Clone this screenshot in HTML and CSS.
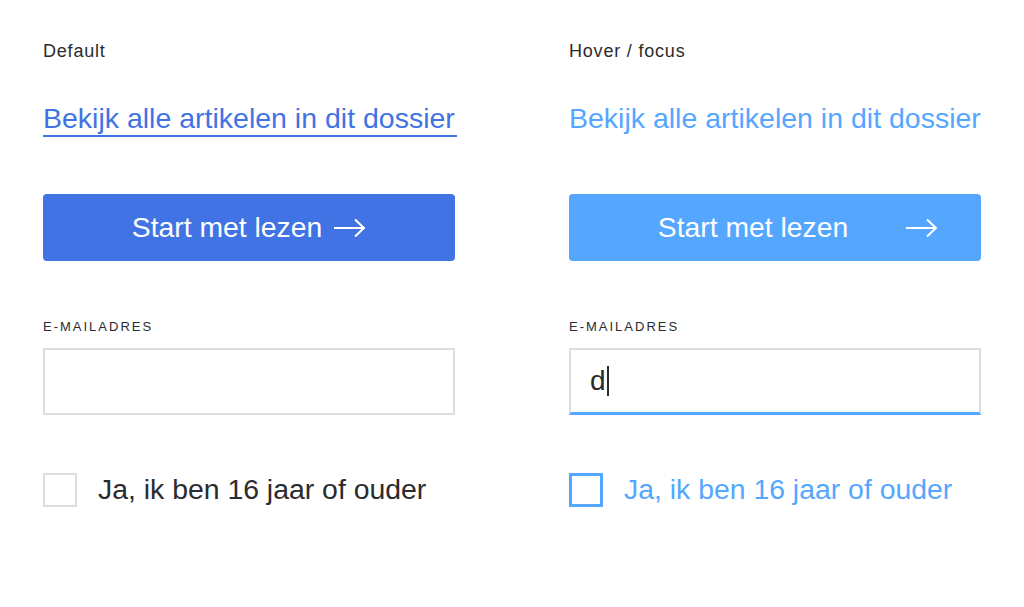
FILE: index.html
```html
<!DOCTYPE html>
<html lang="nl">
<head>
<meta charset="utf-8">
<title>States</title>
<link rel="stylesheet" href="styles.css">
</head>
<body>
<main class="grid">
  <section class="col">
    <div class="state-title">Default</div>
    <div class="link-row"><a class="link" href="#">Bekijk alle artikelen in dit dossier</a></div>
    <button class="btn">
      <span>Start met lezen</span>
      <svg class="arrow" width="33" height="20" viewBox="0 0 33 20"><path d="M1 10H31M22 1.5L31 10L22 18.5" fill="none" stroke="#fff" stroke-width="2"/></svg>
    </button>
    <div class="field">
      <div class="field-label">E-MAILADRES</div>
      <div class="input"></div>
    </div>
    <label class="check">
      <span class="box"></span>
      <span class="check-text">Ja, ik ben 16 jaar of ouder</span>
    </label>
  </section>
  <section class="col hover">
    <div class="state-title">Hover / focus</div>
    <div class="link-row"><a class="link" href="#">Bekijk alle artikelen in dit dossier</a></div>
    <button class="btn">
      <span>Start met lezen</span>
      <svg class="arrow" width="33" height="20" viewBox="0 0 33 20"><path d="M1 10H31M22 1.5L31 10L22 18.5" fill="none" stroke="#fff" stroke-width="2"/></svg>
    </button>
    <div class="field">
      <div class="field-label">E-MAILADRES</div>
      <div class="input"><span class="typed">d</span><span class="caret"></span></div>
    </div>
    <label class="check">
      <span class="box"></span>
      <span class="check-text">Ja, ik ben 16 jaar of ouder</span>
    </label>
  </section>
</main>
</body>
</html>
```

FILE: styles.css
```css
* { box-sizing: border-box; }
html, body { margin: 0; padding: 0; background: #fff; }
body {
  font-family: "Liberation Sans", Arial, sans-serif;
  color: #2b2b2e;
}
.grid {
  display: grid;
  grid-template-columns: 412px 412px;
  column-gap: 114px;
  padding: 40px 0 0 43px;
}
.col { display: flex; flex-direction: column; }
.state-title {
  font-size: 18px;
  letter-spacing: 0.8px;
  line-height: 22px;
  color: #2b2b2e;
}
.link-row { margin-top: 40px; height: 37px; }
.link {
  font-size: 28.5px;
  line-height: 32px;
  color: #4173e4;
  text-decoration: none;
  border-bottom: 2px solid #4173e4;
  padding-bottom: 1px;
  display: inline-block;
  width: 414px;
  white-space: nowrap;
}
.hover .link { color: #55a6ff; border-bottom-color: transparent; }
.btn {
  margin-top: 55px;
  height: 67px;
  width: 412px;
  border: 0;
  border-radius: 4px;
  background: #4173e4;
  color: #fff;
  font-family: inherit;
  font-size: 28.3px;
  display: flex;
  align-items: center;
  justify-content: center;
  gap: 11px;
  padding: 0;
}
.hover .btn { background: #55a6ff; }
.hover .btn .arrow { transform: translateX(46px); }
.field { margin-top: 58px; }
.field-label {
  font-size: 13px;
  letter-spacing: 2px;
  line-height: 16px;
  color: #2b2b2e;
}
.input {
  margin-top: 13px;
  height: 67px;
  border: 2px solid #dcdde2;
  display: flex;
  align-items: center;
  padding-left: 19px;
}
.hover .input { border-bottom: 3px solid #55a6ff; }
.typed { font-size: 28px; color: #2b2b2e; }
.caret { width: 2px; height: 30px; background: #2b2b2e; margin-left: 1px; }
.check {
  margin-top: 58px;
  display: flex;
  align-items: center;
  gap: 21px;
}
.box {
  width: 34px;
  height: 34px;
  border: 2px solid #dcdde2;
  flex: none;
}
.check-text { font-size: 28.4px; line-height: 32px; color: #2b2b2e; margin-top: -2px; }
.hover .box { border: 3px solid #55a6ff; }
.hover .check-text { color: #55a6ff; }
```
